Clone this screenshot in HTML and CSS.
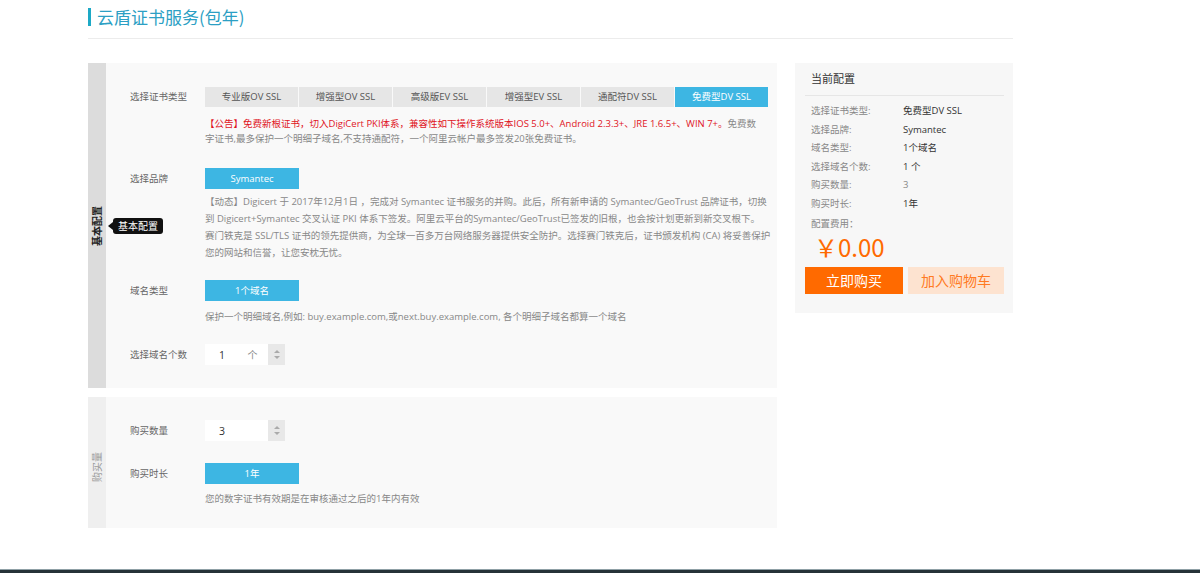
FILE: index.html
```html
<!DOCTYPE html>
<html lang="zh-CN">
<head>
<meta charset="utf-8">
<title>云盾证书服务(包年)</title>
<link rel="stylesheet" href="styles.css">
</head>
<body>
<div class="page">
  <div class="head">
    <h1 class="title">云盾证书服务(包年)</h1>
  </div>
  <div class="main">
    <div class="left">
      <div class="section sec-basic">
        <div class="side side-dark">
          <span class="side-text">基本配置</span>
          <span class="tip">基本配置</span>
        </div>
        <div class="content">
          <div class="row row-type">
            <div class="label">选择证书类型</div>
            <div class="tabs">
              <span class="tab">专业版OV SSL</span>
              <span class="tab">增强型OV SSL</span>
              <span class="tab">高级版EV SSL</span>
              <span class="tab">增强型EV SSL</span>
              <span class="tab">通配符DV SSL</span>
              <span class="tab active">免费型DV SSL</span>
            </div>
          </div>
          <p class="note note-type"><span class="red">【公告】免费新根证书，切入DigiCert PKI体系，兼容性如下操作系统版本IOS 5.0+、Android 2.3.3+、JRE 1.6.5+、WIN 7+。</span>免费数字证书,最多保护一个明细子域名,不支持通配符，一个阿里云帐户最多签发20张免费证书。</p>

          <div class="row row-brand">
            <div class="label">选择品牌</div>
            <span class="btn">Symantec</span>
          </div>
          <div class="note note-brand">
            <p class="para">【动态】Digicert 于 2017年12月1日 ，完成对 Symantec 证书服务的并购。此后，所有新申请的 Symantec/GeoTrust 品牌证书，切换到 Digicert+Symantec 交叉认证 PKI 体系下签发。阿里云平台的Symantec/GeoTrust已签发的旧根，也会按计划更新到新交叉根下。</p>
            <p class="para">赛门铁克是 SSL/TLS 证书的领先提供商，为全球一百多万台网络服务器提供安全防护。选择赛门铁克后，证书颁发机构 (CA) 将妥善保护您的网站和信誉，让您安枕无忧。</p>
          </div>

          <div class="row row-domain">
            <div class="label">域名类型</div>
            <span class="btn">1个域名</span>
          </div>
          <p class="note note-domain">保护一个明细域名,例如: buy.example.com,或next.buy.example.com, 各个明细子域名都算一个域名</p>

          <div class="row row-count">
            <div class="label">选择域名个数</div>
            <div class="num">
              <span class="num-val">1</span><span class="num-unit">个</span>
              <span class="spin"><i class="up"></i><i class="down"></i></span>
            </div>
          </div>
        </div>
      </div>

      <div class="section sec-buy">
        <div class="side side-light">
          <span class="side-text">购买量</span>
        </div>
        <div class="content">
          <div class="row row-qty">
            <div class="label">购买数量</div>
            <div class="num">
              <span class="num-val">3</span><span class="num-unit"></span>
              <span class="spin"><i class="up"></i><i class="down"></i></span>
            </div>
          </div>
          <div class="row row-dur">
            <div class="label">购买时长</div>
            <span class="btn">1年</span>
          </div>
          <p class="note note-dur">您的数字证书有效期是在审核通过之后的1年内有效</p>
        </div>
      </div>
    </div>

    <div class="right">
      <div class="cfg-title">当前配置</div>
      <dl class="cfg">
        <div class="cfg-row"><dt>选择证书类型:</dt><dd>免费型DV SSL</dd></div>
        <div class="cfg-row"><dt>选择品牌:</dt><dd>Symantec</dd></div>
        <div class="cfg-row"><dt>域名类型:</dt><dd>1个域名</dd></div>
        <div class="cfg-row"><dt>选择域名个数:</dt><dd>1 个</dd></div>
        <div class="cfg-row"><dt>购买数量:</dt><dd class="muted">3</dd></div>
        <div class="cfg-row"><dt>购买时长:</dt><dd>1年</dd></div>
      </dl>
      <div class="fee-label">配置费用：</div>
      <div class="price">￥0.00</div>
      <div class="actions">
        <span class="buy">立即购买</span>
        <span class="cart">加入购物车</span>
      </div>
    </div>
  </div>
  <div class="footer"></div>
</div>
</body>
</html>
```

FILE: styles.css
```css
* { box-sizing: border-box; }
html, body { margin: 0; padding: 0; background: #fff; }
body {
  font-family: "Open Sans", "Noto Sans CJK SC", sans-serif;
  font-size: 9.5px;
  color: #666;
  overflow: hidden;
}
.page { width: 1200px; }

.head {
  margin-left: 88px;
  width: 925px;
  padding-top: 8px;
  height: 39px;
  border-bottom: 1px solid #ececec;
}
.title {
  margin: 0;
  font-family: "Noto Sans CJK SC", sans-serif;
  font-weight: normal;
  font-size: 17px;
  line-height: 18px;
  color: #2c9fc4;
  border-left: 3px solid #1da9c6;
  padding-left: 6px;
}

.main {
  margin-left: 88px;
  width: 925px;
  margin-top: 24px;
  display: flex;
  align-items: flex-start;
  gap: 18px;
}
.left { width: 689px; display: flex; flex-direction: column; gap: 9px; }

.section { display: flex; background: #f9f9f9; }
.sec-basic { height: 325px; }
.sec-buy { height: 131px; }

.side {
  width: 18px;
  position: relative;
  display: flex;
  align-items: center;
  justify-content: center;
  flex: none;
}
.side-dark { background: #dcdcdc; }
.side-light { background: #efefef; }
.side-text {
  writing-mode: vertical-rl;
  text-orientation: sideways;
  transform: rotate(180deg);
  font-size: 10px;
  line-height: 12px;
  white-space: nowrap;
}
.side-dark .side-text { color: #222; font-weight: bold; }
.side-light .side-text { color: #999; margin-top: 8px; }

.tip {
  position: absolute;
  left: 25px;
  top: 155px;
  background: #111;
  color: #fff;
  font-size: 10px;
  line-height: 16px;
  padding: 0 5px;
  border-radius: 3px;
  white-space: nowrap;
}
.tip::before {
  content: "";
  position: absolute;
  left: -5px;
  top: 4px;
  border-top: 4px solid transparent;
  border-bottom: 4px solid transparent;
  border-right: 5px solid #111;
}

.content { flex: 1; padding-left: 24px; }

.row { display: flex; align-items: center; }
.label { width: 75px; flex: none; color: #666; font-size: 9.5px; line-height: 14px; }

.row-type { margin-top: 24px; }
.tabs { display: flex; gap: 1px; }
.tab {
  width: 93px;
  height: 20px;
  line-height: 20px;
  text-align: center;
  background: #e6e6e6;
  color: #555;
  font-size: 9.5px;
}
.tab.active { background: #3db6e3; color: #fff; }

.note {
  margin: 0 0 0 75px;
  width: 562px;
  font-size: 9.5px;
  color: #888;
}
.red { color: #e0141e; }
.note-type { margin-top: 9px; line-height: 15px; width: 558px; }

.btn {
  display: inline-block;
  width: 94px;
  height: 21px;
  line-height: 21px;
  text-align: center;
  background: #3db6e3;
  color: #fff;
  font-size: 9.5px;
}
.row-brand { margin-top: 22px; }
.note-brand { margin-top: 4px; line-height: 17px; width: 567px; }
.para { margin: 0; }
.row-domain { margin-top: 19px; }
.note-domain { margin-top: 7px; line-height: 17px; }
.row-count { margin-top: 19px; }

.num {
  display: flex;
  width: 80px;
  height: 21px;
  background: #fff;
  align-items: center;
}
.num-val { width: 32px; padding-left: 14px; color: #333; font-size: 10.5px; }
.num-unit { width: 31px; text-align: center; color: #888; font-size: 10px; }
.spin {
  margin-left: auto;
  width: 17px;
  height: 21px;
  background: #e8e8e8;
  display: flex;
  flex-direction: column;
  align-items: center;
  justify-content: center;
  gap: 3px;
}
.spin i { display: block; width: 0; height: 0; border-left: 3px solid transparent; border-right: 3px solid transparent; }
.spin .up { border-bottom: 3px solid #aaa; }
.spin .down { border-top: 3px solid #aaa; }

.row-qty { margin-top: 23px; }
.row-dur { margin-top: 22px; }
.note-dur { margin-top: 6px; line-height: 17px; }

.right {
  width: 218px;
  height: 250px;
  background: #f7f7f7;
  padding: 8px 9px 0 10px;
}
.cfg-title {
  color: #333;
  font-size: 11px;
  line-height: 16px;
  padding: 0 0 8px 6px;
  border-bottom: 1px solid #e6e6e6;
}
.cfg { margin: 6px 0 0; padding-left: 6px; }
.cfg-row { display: flex; height: 18.6px; line-height: 18.6px; font-size: 9.5px; }
.cfg dt { width: 92px; color: #888; }
.cfg dd { margin: 0; color: #333; }
.cfg dd.muted { color: #888; }
.fee-label { padding-left: 6px; margin-top: 1px; color: #888; font-size: 9.5px; line-height: 17px; }
.price {
  font-family: "Noto Sans CJK SC", sans-serif;
  color: #ff6a00;
  font-size: 24px;
  line-height: 26px;
  padding-left: 9px;
  margin-top: 2px;
}
.actions { display: flex; gap: 5px; margin-top: 7px; }
.buy, .cart {
  font-family: "Noto Sans CJK SC", sans-serif;
  height: 27px;
  line-height: 27px;
  text-align: center;
  font-size: 14px;
}
.buy { width: 98px; background: #ff6a00; color: #fff; }
.cart { width: 96px; background: #fde3d0; color: #ff7a22; }

.footer {
  margin-top: 41px;
  height: 6px;
  background: #263238;
  border-top: 1px solid #8fa0a6;
}
```
